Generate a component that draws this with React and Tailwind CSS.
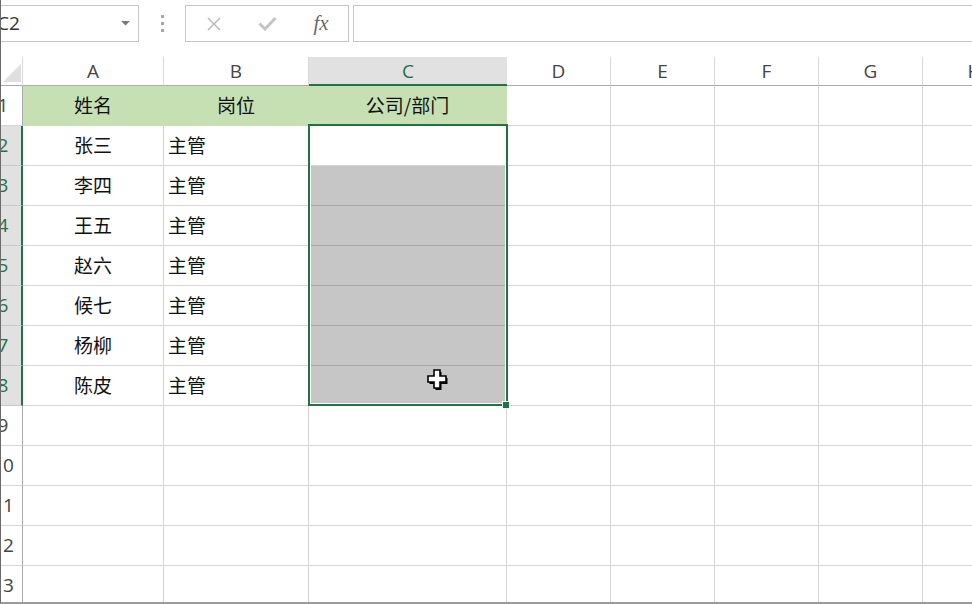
import React from 'react';

const cols = [
  { key: 'A', w: 'w-[141px]' },
  { key: 'B', w: 'w-[145px]' },
  { key: 'C', w: 'w-[198px]' },
  { key: 'D', w: 'w-[104px]' },
  { key: 'E', w: 'w-[104px]' },
  { key: 'F', w: 'w-[104px]' },
  { key: 'G', w: 'w-[104px]' },
  { key: 'H', w: 'w-[104px]' },
];

const data = [
  ['张三', '主管'],
  ['李四', '主管'],
  ['王五', '主管'],
  ['赵六', '主管'],
  ['候七', '主管'],
  ['杨柳', '主管'],
  ['陈皮', '主管'],
];

const cjk = "font-['Noto_Sans_CJK_SC',sans-serif]";
const ui = "font-['Open_Sans','Noto_Sans',sans-serif]";

// row number column is scrolled partly off the left edge
const RowHeader = ({ n, selected }) => (
  <div
    className={`w-[22px] shrink-0 h-full flex items-center overflow-hidden text-[19px] ${ui} ${
      selected
        ? 'bg-[#e1e1e1] text-[#217346] border-r-2 border-[#217346] border-b border-b-[#c8c8c8]'
        : 'bg-white text-[#444] border-r border-[#ababab] border-b border-b-[#d4d4d4]'
    }`}
  >
    <span className="w-[40px] shrink-0 -ml-[18px] text-center whitespace-nowrap">{n}</span>
  </div>
);

const Cell = ({ w, className = '', children }) => (
  <div className={`${w} shrink-0 h-full border-r border-b flex items-center ${className}`}>{children}</div>
);

const App = () => {
  const rows = [];
  // row 1: header with green fill
  rows.push(
    <div key={1} className="flex h-[40px]">
      <RowHeader n={1} />
      {cols.map((c, i) =>
        i < 3 ? (
          <Cell key={c.key} w={c.w} className={`bg-[#c6e0b4] border-[#c6e0b4] justify-center text-[19px] text-[#111] ${cjk}`}>
            {['姓名', '岗位', '公司/部门'][i]}
          </Cell>
        ) : (
          <Cell key={c.key} w={c.w} className="border-[#d4d4d4]" />
        )
      )}
    </div>
  );
  data.forEach((d, r) => {
    const n = r + 2;
    rows.push(
      <div key={n} className="flex h-[40px]">
        <RowHeader n={n} selected />
        {cols.map((c, i) => {
          if (i === 0)
            return (
              <Cell key={c.key} w={c.w} className={`border-[#d4d4d4] justify-center text-[19px] text-[#111] ${cjk}`}>
                {d[0]}
              </Cell>
            );
          if (i === 1)
            return (
              <Cell key={c.key} w={c.w} className={`border-[#d4d4d4] pl-[4px] text-[19px] text-[#111] ${cjk}`}>
                {d[1]}
              </Cell>
            );
          if (i === 2)
            return (
              <Cell
                key={c.key}
                w={c.w}
                className={n === 2 ? 'bg-white border-[#d4d4d4]' : 'bg-[#c6c6c6] border-[#a9a9a9]'}
              />
            );
          return <Cell key={c.key} w={c.w} className="border-[#d4d4d4]" />;
        })}
      </div>
    );
  });
  for (let n = 9; n <= 13; n++) {
    rows.push(
      <div key={n} className="flex h-[40px]">
        <RowHeader n={n} />
        {cols.map((c) => (
          <Cell key={c.key} w={c.w} className="border-[#d4d4d4]" />
        ))}
      </div>
    );
  }

  return (
    <div className="relative w-[972px] h-[604px] overflow-hidden bg-white border-l border-l-[#6a6a6a] border-b-2 border-b-[#9a9a9a] flex flex-col">
      {/* Toolbar */}
      <div className="h-[57px] shrink-0 flex items-start pt-[5px]">
        <div className="w-[138px] h-[37px] shrink-0 border-y border-r border-[#c6c6c6] flex items-center justify-between pr-[8px]">
          <span className={`-ml-[4px] text-[19px] text-[#333] ${ui}`}>C2</span>
          <svg width="9" height="5" viewBox="0 0 9 5">
            <path d="M0 0 L9 0 L4.5 4.5 Z" fill="#7a7a7a" />
          </svg>
        </div>
        <div className="w-[46px] h-[37px] shrink-0 flex flex-col items-center justify-center gap-[4px]">
          <div className="w-[3px] h-[3px] bg-[#a6a6a6]" />
          <div className="w-[3px] h-[3px] bg-[#a6a6a6]" />
          <div className="w-[3px] h-[3px] bg-[#a6a6a6]" />
        </div>
        <div className="w-[164px] h-[37px] shrink-0 border border-[#c6c6c6] flex items-center">
          <div className="w-[54px] flex justify-center pl-[2px]">
            <svg width="16" height="16" viewBox="0 0 16 16">
              <path d="M2 2 L14 14 M14 2 L2 14" stroke="#bdbdbd" strokeWidth="1.6" fill="none" />
            </svg>
          </div>
          <div className="w-[54px] flex justify-center">
            <svg width="19" height="15" viewBox="0 0 19 15">
              <path d="M1.5 7.5 L7 13 L17.5 2" stroke="#c4c4c4" strokeWidth="3" fill="none" />
            </svg>
          </div>
          <div className="w-[54px] flex justify-center">
            <span className="font-['Liberation_Serif',serif] italic text-[21px] text-[#6a6a6a] leading-none">
              fx
            </span>
          </div>
        </div>
        <div className="ml-[4px] flex-1 h-[37px] border-y border-l border-[#c6c6c6]" />
      </div>

      {/* Column headers */}
      <div className="flex h-[29px] shrink-0">
        <div className="w-[22px] shrink-0 h-full border-r border-[#d9d9d9] border-b border-b-[#ababab] flex items-end justify-end pr-[1px] pb-[3px]">
          <svg width="18" height="18" viewBox="0 0 18 18">
            <path d="M18 0 L18 18 L0 18 Z" fill="#dfdfdf" />
          </svg>
        </div>
        {cols.map((c) => (
          <div
            key={c.key}
            className={`${c.w} shrink-0 h-full flex items-center justify-center text-[19px] ${ui} ${
              c.key === 'C'
                ? 'bg-[#e1e1e1] text-[#217346] border-b-2 border-[#217346] pt-[2px]'
                : 'text-[#444] border-r border-[#d9d9d9] border-b border-b-[#ababab]'
            }`}
          >
            {c.key}
          </div>
        ))}
      </div>

      {/* Rows */}
      <div className="flex flex-col">{rows}</div>

      {/* Selection overlay */}
      <div className="absolute left-[307px] top-[124px] w-[200px] h-[282px] border-2 border-[#217346] shadow-[inset_0_0_0_1px_#ffffff] pointer-events-none" />
      <div className="absolute left-[501px] top-[401px] w-[8px] h-[8px] bg-[#217346] border border-white" />

      {/* Cursor */}
      <svg className="absolute left-[425px] top-[368px]" width="24" height="25" viewBox="0 0 24 25">
        <path
          d="M8 2 H14 V8 H20 V14 H14 V20 H8 V14 H2 V8 H8 Z"
          transform="translate(1.5 2)"
          fill="#000"
        />
        <path d="M8 2 H14 V8 H20 V14 H14 V20 H8 V14 H2 V8 H8 Z" fill="#fff" stroke="#000" strokeWidth="1.6" />
      </svg>
    </div>
  );
};

export default App;
